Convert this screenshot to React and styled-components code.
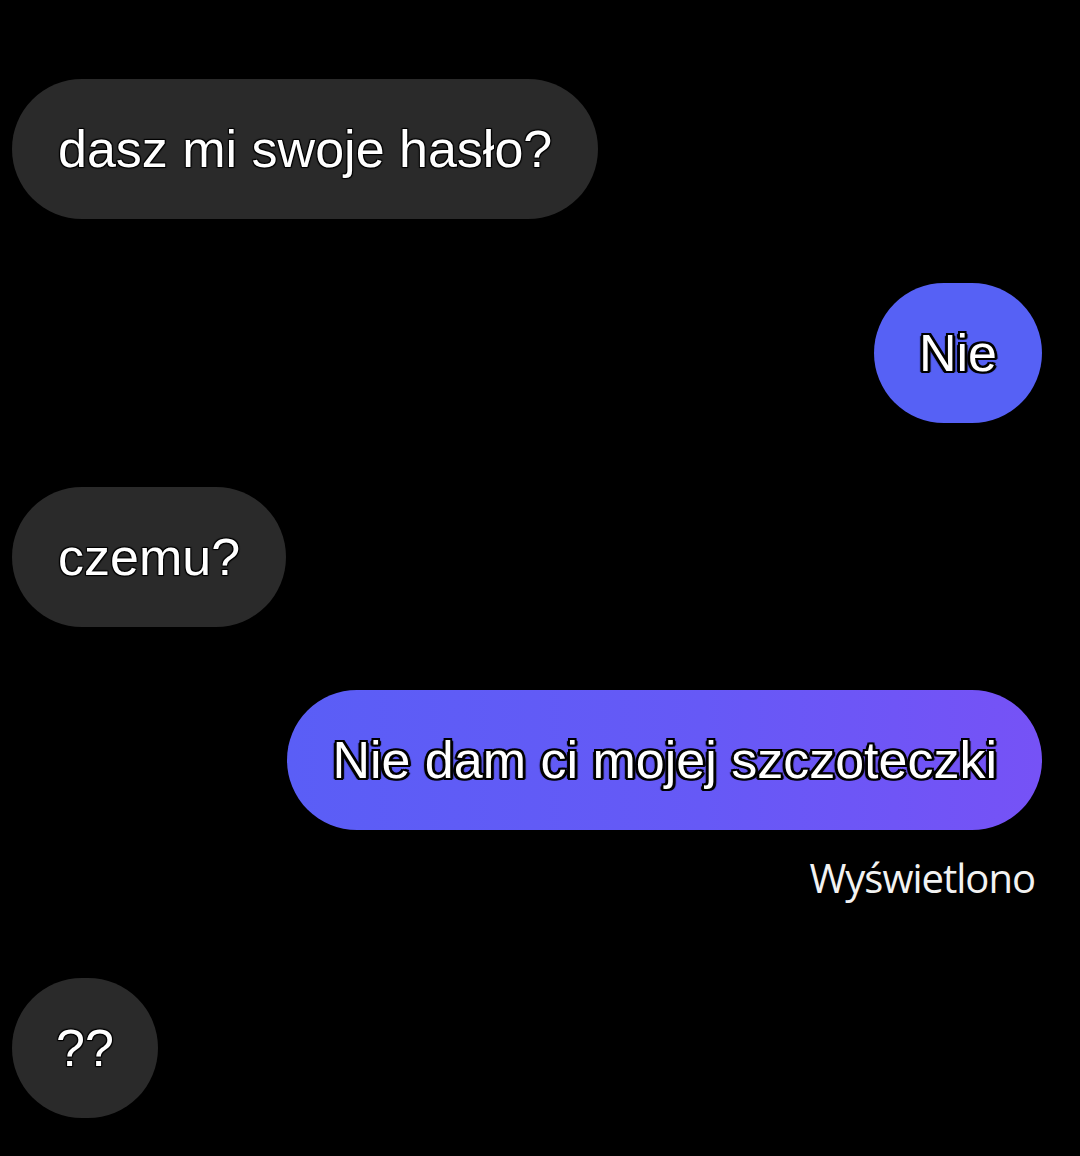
import styled, { createGlobalStyle } from 'styled-components';

const Global = createGlobalStyle`
    body {
        margin: 0;
        background: #000;
    }
`

const Chat = styled.div`
    width: 1080px;
    height: 1156px;
    box-sizing: border-box;
    padding: 79px 38px 0 12px;
    display: flex;
    flex-direction: column;
    background: #000;
    font-family: "Liberation Sans", Arial, sans-serif;
    overflow: hidden;
`

const Bubble = styled.div`
    align-self: ${(p) => (p.$mine ? 'flex-end' : 'flex-start')};
    height: 140px;
    box-sizing: border-box;
    padding: 0 ${(p) => p.$pad || 46}px;
    margin-top: ${(p) => p.$top || 0}px;
    border-radius: 70px;
    display: flex;
    align-items: center;
    background: ${(p) =>
        p.$mine
            ? 'linear-gradient(90deg, #5a5ef6 0%, #6659f6 55%, #7652f6 100%)'
            : '#2a2a2a'};
    color: #fff;
    font-size: 52px;
    white-space: nowrap;
    text-shadow: ${(p) =>
        p.$mine
            ? '2px 0 0 #000, -2px 0 0 #000, 0 2px 0 #000, 0 -2px 0 #000, 2px 2px 0 #000, -2px -2px 0 #000, 2px -2px 0 #000, -2px 2px 0 #000, 3px 1px 1px #000, -3px 1px 1px #000'
            : '1px 1px 1px #000, -1px -1px 1px #000, 1px -1px 1px #000, -1px 1px 1px #000'};
`

const Seen = styled.div`
    align-self: flex-end;
    margin: 25px 7px 0 0;
    color: #f2f2f2;
    font-family: "Open Sans", "Liberation Sans", sans-serif;
    font-size: 40px;
    letter-spacing: -1px;
    line-height: 46px;
`

export default function App() {
    return (
        <>
            <Global />
            <Chat>
                <Bubble>dasz mi swoje hasło?</Bubble>
                <Bubble $mine $top={64} $pad={45} style={{ background: '#5661f5' }}>Nie</Bubble>
                <Bubble $top={64}>czemu?</Bubble>
                <Bubble $mine $top={63} $pad={45}>Nie dam ci mojej szczoteczki</Bubble>
                <Seen>Wyświetlono</Seen>
                <Bubble $top={77} $pad={44}>??</Bubble>
            </Chat>
        </>
    )
}
